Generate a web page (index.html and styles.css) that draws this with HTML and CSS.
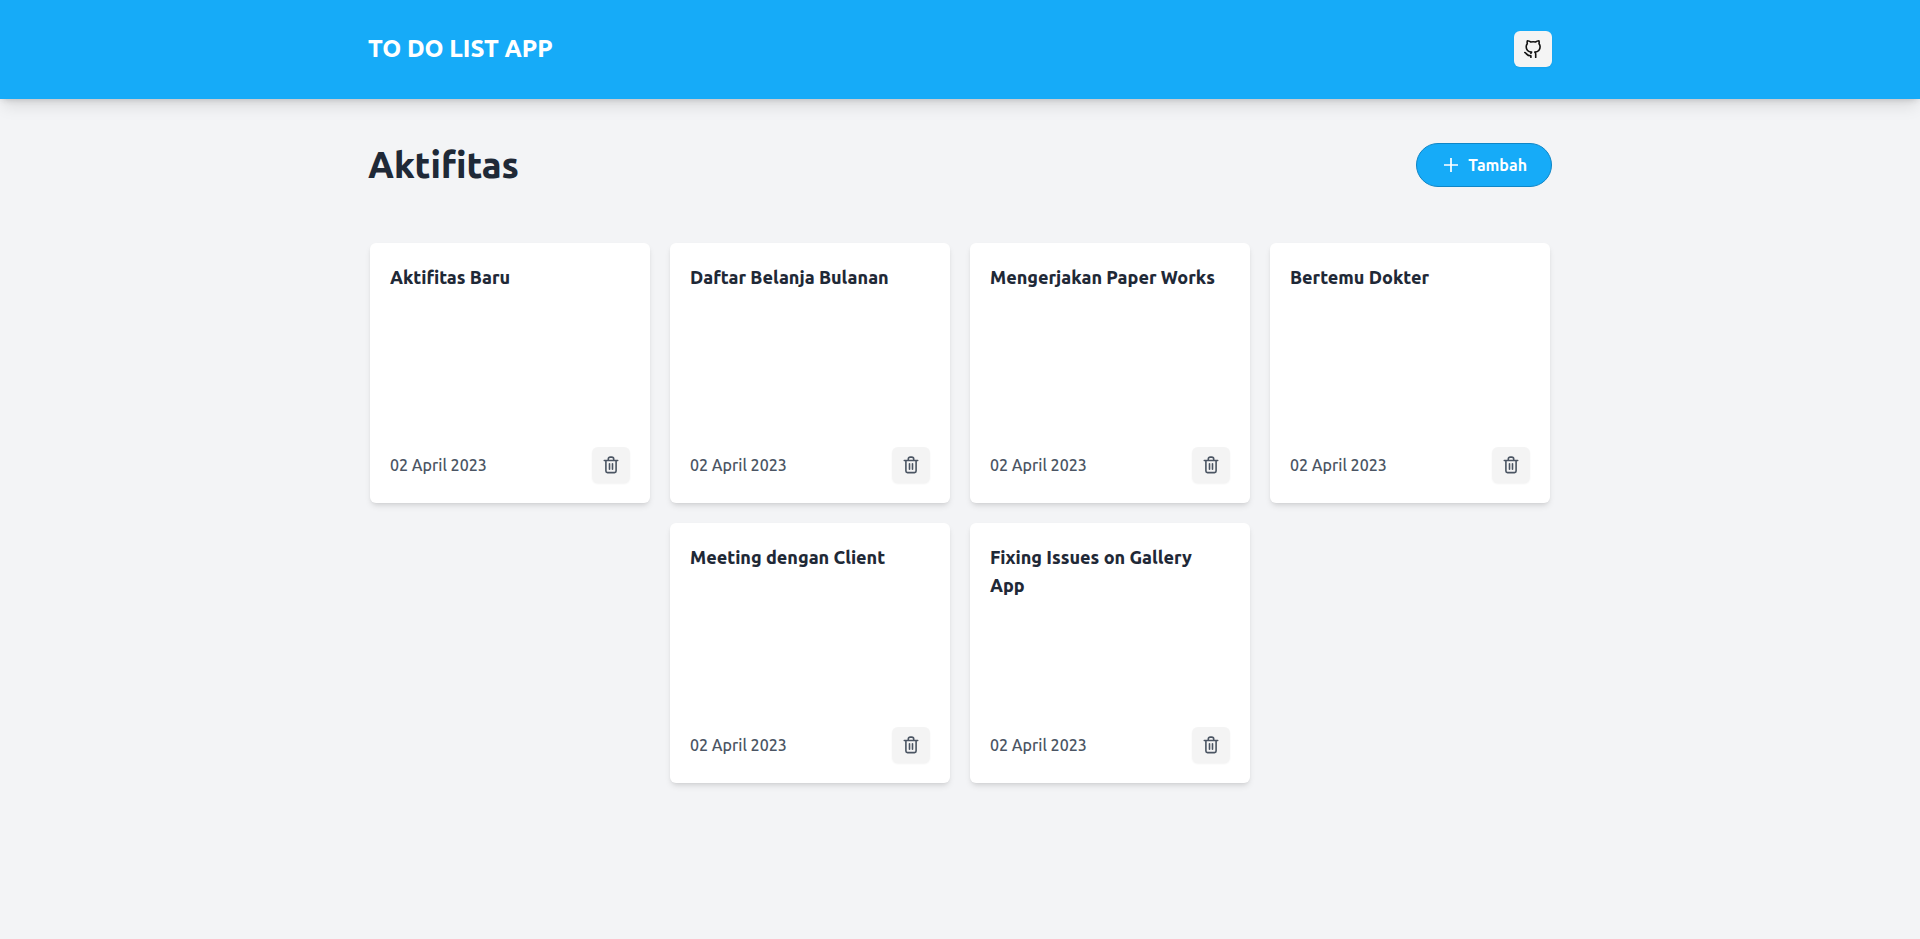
FILE: index.html
```html
<!DOCTYPE html>
<html lang="id">
<head>
<meta charset="utf-8">
<meta name="viewport" content="width=device-width, initial-scale=1">
<title>To Do List App</title>
<link rel="stylesheet" href="styles.css">
</head>
<body>
<svg class="sprite" aria-hidden="true">
  <symbol id="trash" viewBox="0 0 18 18">
    <path d="M2.300 4.500h13.400M6.300 4.300V3a1.900 1.900 0 0 1 1.900-1.900h1.600A1.900 1.900 0 0 1 11.700 3v1.300M3.900 4.700v10.300a1.600 1.600 0 0 0 1.600 1.600h7a1.600 1.600 0 0 0 1.600-1.600V4.700M7.500 7.800v5.400M10.500 7.800v5.400"/>
  </symbol>
</svg>
<header class="header">
  <div class="container header-row">
    <h1 class="brand">TO DO LIST APP</h1>
    <a class="icon-button" href="#" aria-label="GitHub">
      <svg class="icon github" viewBox="0 0 18 18"><path d="M6.900 13.400c.1-.5.300-.9.700-1.300C4.400 11.800 2.200 10.100 2.200 6.700c0-1.200.4-2.200 1.100-3-.3-.9-.2-1.900.1-2.900 1.500.1 2.500.6 3.400 1.200 1.500-.3 3.200-.3 4.700 0 .9-.6 1.900-1.100 3.400-1.200.3 1 .4 2 .1 2.900.7.800 1.100 1.800 1.100 3 0 3.400-2.200 5.100-5.300 5.400.6.500.9 1.200.9 2V17.400M6.900 15.800V17.400M.8 12.600c1.900.6 2 3.500 6.100 3.200" /></svg>
    </a>
  </div>
</header>
<main class="container">
  <div class="toolbar">
    <h2 class="heading">Aktifitas</h2>
    <button class="add-button" type="button">
      <svg class="plus" viewBox="0 0 14 14" aria-hidden="true"><path d="M7 0v14M0 7h14"/></svg>
      <span>Tambah</span>
    </button>
  </div>
  <div class="cards">
    <article class="card">
      <h3 class="card-title">Aktifitas Baru</h3>
      <footer class="card-footer"><time datetime="2023-04-02">02 April 2023</time><button class="icon-button" type="button" aria-label="Hapus"><svg class="icon"><use href="#trash"/></svg></button></footer>
    </article>
    <article class="card">
      <h3 class="card-title">Daftar Belanja Bulanan</h3>
      <footer class="card-footer"><time datetime="2023-04-02">02 April 2023</time><button class="icon-button" type="button" aria-label="Hapus"><svg class="icon"><use href="#trash"/></svg></button></footer>
    </article>
    <article class="card">
      <h3 class="card-title">Mengerjakan Paper Works</h3>
      <footer class="card-footer"><time datetime="2023-04-02">02 April 2023</time><button class="icon-button" type="button" aria-label="Hapus"><svg class="icon"><use href="#trash"/></svg></button></footer>
    </article>
    <article class="card">
      <h3 class="card-title">Bertemu Dokter</h3>
      <footer class="card-footer"><time datetime="2023-04-02">02 April 2023</time><button class="icon-button" type="button" aria-label="Hapus"><svg class="icon"><use href="#trash"/></svg></button></footer>
    </article>
    <article class="card">
      <h3 class="card-title">Meeting dengan Client</h3>
      <footer class="card-footer"><time datetime="2023-04-02">02 April 2023</time><button class="icon-button" type="button" aria-label="Hapus"><svg class="icon"><use href="#trash"/></svg></button></footer>
    </article>
    <article class="card">
      <h3 class="card-title">Fixing Issues on Gallery App</h3>
      <footer class="card-footer"><time datetime="2023-04-02">02 April 2023</time><button class="icon-button" type="button" aria-label="Hapus"><svg class="icon"><use href="#trash"/></svg></button></footer>
    </article>
  </div>
</main>
</body>
</html>
```
FILE: styles.css
```css
* { box-sizing: border-box; }
body {
  margin: 0;
  background: #f3f4f6;
  color: #1f2937;
  font-family: Ubuntu, "Noto Sans", "Open Sans", sans-serif;
  font-size: 16px;
  line-height: 24px;
}
h1, h2, h3 { margin: 0; }
.sprite { display: none; }
.container { max-width: 1280px; margin: 0 auto; padding: 0 48px; }
.header {
  padding: 31px 0 32px;
  background: #16abf8;
  box-shadow: 0 10px 15px -3px rgb(0 0 0 / 0.1), 0 4px 6px -4px rgb(0 0 0 / 0.1), 0 0 8px rgb(0 0 0 / 0.1);
}
.header-row, .toolbar, .card-footer {
  display: flex;
  align-items: center;
  justify-content: space-between;
}
.brand { color: #fff; font-size: 24px; line-height: 32px; font-weight: 800; }
.icon-button {
  display: flex;
  align-items: center;
  justify-content: center;
  width: 38px;
  height: 36px;
  padding: 0;
  border: 0;
  border-radius: 6px;
  background: #f4f4f4;
  color: #4b5563;
  box-shadow: 0 1px 2px rgb(0 0 0 / 0.05);
}
.icon {
  width: 18px;
  height: 18px;
  fill: none;
  stroke: currentColor;
  stroke-width: 1.6;
  stroke-linecap: round;
  stroke-linejoin: round;
}
.github { color: #111; }
.toolbar { padding: 44px 0 56px; }
.heading { font-size: 36px; line-height: 40px; font-weight: 800; }
.add-button {
  display: flex;
  align-items: center;
  gap: 10px;
  height: 44px;
  padding: 0 24px 0 27px;
  border: 1px solid #0e86c7;
  border-radius: 22px;
  background: #16abf8;
  color: #fff;
  font: inherit;
  font-weight: 600;
}
.plus { width: 14px; height: 14px; fill: none; stroke: currentColor; stroke-width: 1.7; }
.cards { display: flex; flex-wrap: wrap; justify-content: center; gap: 20px; padding-bottom: 40px; }
.card {
  display: flex;
  flex-direction: column;
  justify-content: space-between;
  width: 280px;
  min-height: 260px;
  padding: 20px;
  border-radius: 6px;
  background: #fff;
  box-shadow: 0 4px 6px -1px rgb(0 0 0 / 0.1), 0 2px 4px -2px rgb(0 0 0 / 0.1);
}
.card-title { padding-right: 8px; font-size: 18px; line-height: 28px; font-weight: 800; }
.card-footer { color: #4b5563; font-weight: 500; }
```
